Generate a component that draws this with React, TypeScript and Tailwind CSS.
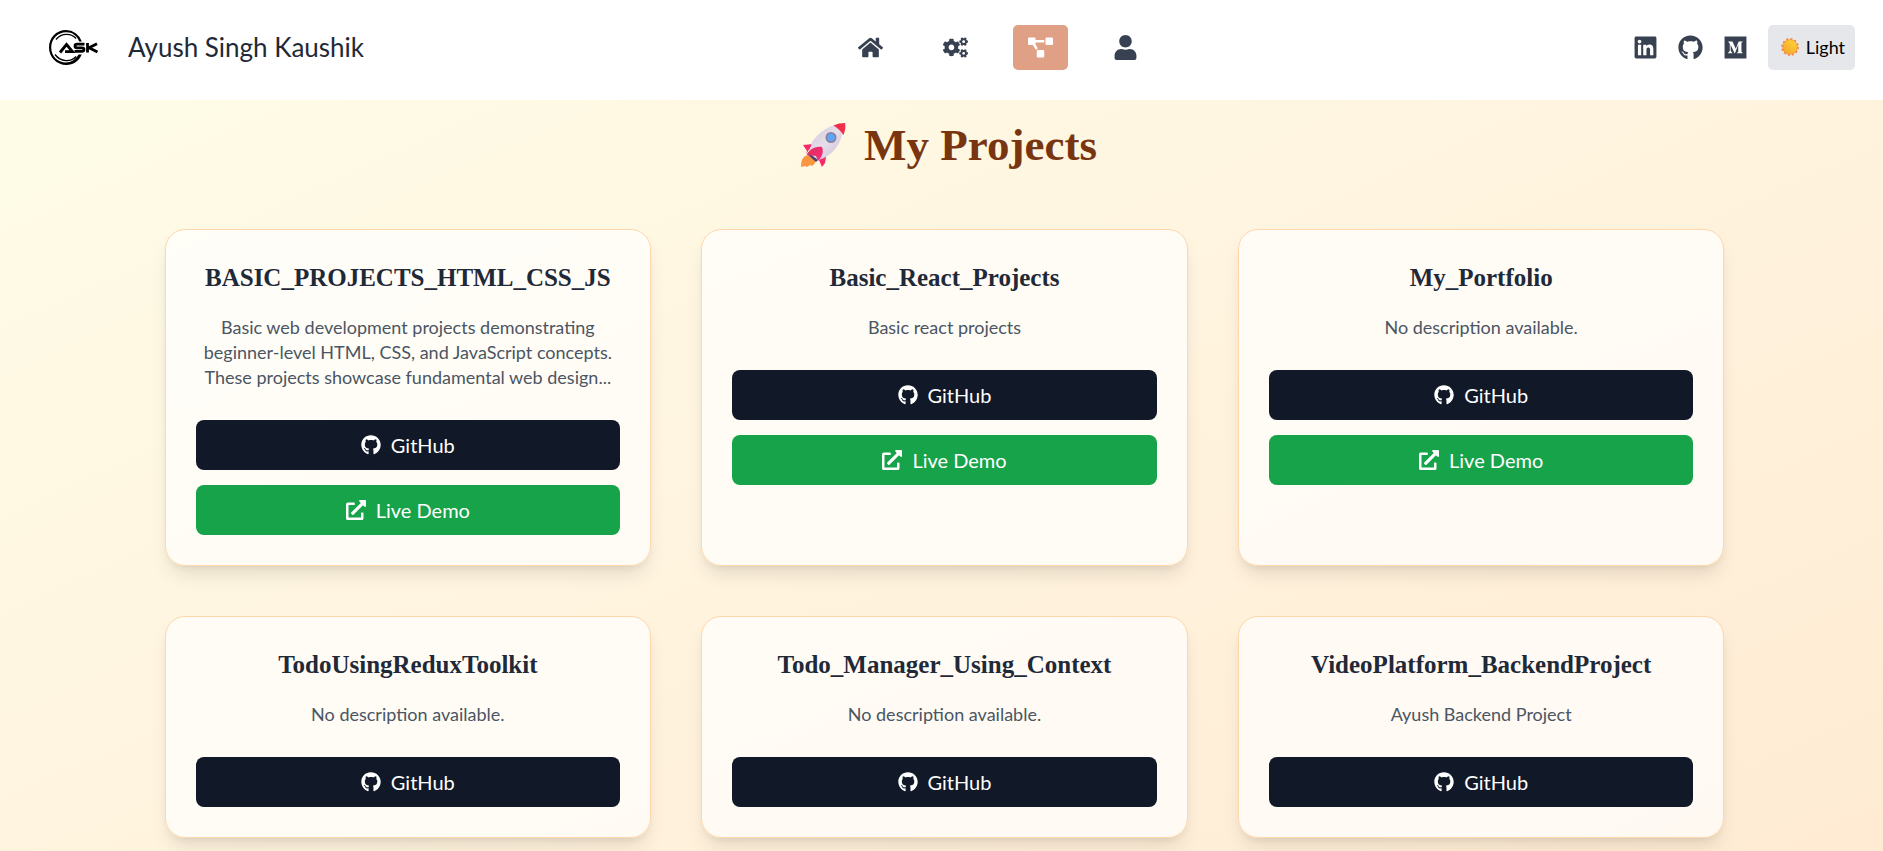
import { FaCogs, FaExternalLinkAlt, FaGithub, FaHome, FaLinkedin, FaMedium, FaProjectDiagram, FaUser } from "react-icons/fa";

type Project = { name: string; description: string; demo?: boolean };

const projects: Project[] = [
  {
    name: "BASIC_PROJECTS_HTML_CSS_JS",
    description:
      "Basic web development projects demonstrating beginner-level HTML, CSS, and JavaScript concepts. These projects showcase fundamental web design...",
    demo: true,
  },
  { name: "Basic_React_Projects", description: "Basic react projects", demo: true },
  { name: "My_Portfolio", description: "No description available.", demo: true },
  { name: "TodoUsingReduxToolkit", description: "No description available." },
  { name: "Todo_Manager_Using_Context", description: "No description available." },
  { name: "VideoPlatform_BackendProject", description: "Ayush Backend Project" },
];

function Logo() {
  return (
    <svg viewBox="0 0 52 36" className="h-9 w-[52px]" aria-hidden="true">
      <path d="M33.800 12.500A17 17 0 0 0 18 1C8 1 1 9 1 18.500S8.500 36 18.500 36C25 36 31 32 33.800 25.500L30.500 25.500C27.500 30.500 23 33.500 18 33.500 9.500 33.500 3.200 27 3.200 18.500S9.500 3.200 18.500 3.200C24 3.200 29 6.500 31.200 12.500Z" fill="#000" />
      <path d="M28 9.500C24 4.500 14 3 8 10.500M7 25.500c6 8 16 7.500 21 2" fill="none" stroke="#000" strokeWidth="1.300" />
      <g fill="none" stroke="#000" strokeWidth="2.800">
        <path d="M12 23.500 18.500 15.500 24.500 22.700H17" />
        <path d="M36.500 15.200H29Q27 15.200 27 17T29 18.800H34Q36 18.800 36 20.600T34 22.400H26.500" />
        <path d="M39.500 14V23.600M49 14.700 41 18.800 49.500 23" />
      </g>
    </svg>
  );
}

function Rocket() {
  return (
    <svg viewBox="0 0 46 46" className="size-[46px]" aria-hidden="true">
      <defs>
        <linearGradient id="hull" x1="0" y1="0" x2="1" y2="1">
          <stop offset="0" stopColor="#cfc6d6" />
          <stop offset="0.5" stopColor="#e6deeb" />
          <stop offset="1" stopColor="#c9b8d2" />
        </linearGradient>
        <linearGradient id="fin" x1="0" y1="0" x2="1" y2="1">
          <stop offset="0" stopColor="#d9305e" />
          <stop offset="1" stopColor="#ff2a78" />
        </linearGradient>
      </defs>
      <path d="M8 33C3 34 1 38 1 45l4-1 2 1 3-2 2 1c3-2 4-4 3-6z" fill="#fb9640" />
      <path d="M13 22 3 23 7 29 6 32zM24 33l-5 5 3 7 3-4 1-6z" fill="#f5296b" />
      <path d="M7 32l9 8 4-4-9-8z" fill="#48406f" />
      <path d="M44 2C30 2 20 9 12 20L9 31l9 7C31 35 43 22 44 2z" fill="url(#hull)" />
      <path d="M33.500 3.500C37 1.800 41 1 45 1c1 4 0 8-1.500 12-2.500-4-6-7-10-9.500z" fill="#f02f4b" />
      <path d="M22 25C14 24 9 28 7 33l9 1 2 5c4-4 6-9 4-14z" fill="url(#fin)" />
      <circle cx="31" cy="15.500" r="5.500" fill="#8d8197" />
      <circle cx="31" cy="15.500" r="3.800" fill="#5ba6f5" />
    </svg>
  );
}

function Sun() {
  return (
    <svg viewBox="0 0 20 20" className="size-5" aria-hidden="true">
      <defs>
        <linearGradient id="sun" x1="1" y1="0" x2="0" y2="1">
          <stop offset="0" stopColor="#fdd835" />
          <stop offset="1" stopColor="#f3a02c" />
        </linearGradient>
      </defs>
      <circle cx="10" cy="10" r="7.600" fill="#f68a3c" />
      <circle cx="10" cy="10" r="8" fill="none" stroke="#f68a3c" strokeWidth="1.800" strokeDasharray="2.200 2" />
      <circle cx="10" cy="10" r="6.900" fill="url(#sun)" />
    </svg>
  );
}

function ProjectCard({ name, description, demo }: Project) {
  const button = "flex h-[50px] items-center justify-center gap-2.5 rounded-lg text-xl text-white";
  return (
    <article className="rounded-[20px] border border-[#fed7aa] bg-white/70 p-[30px] text-center shadow-[0_12px_19px_-4px_rgba(0,0,0,0.1),0_5px_8px_-5px_rgba(0,0,0,0.1)]">
      <h2 className="mb-5 font-['Liberation_Serif',serif] text-[25px] leading-[35px] font-bold text-[#1f2937]">{name}</h2>
      <p className="mb-[30px] text-lg leading-[25px] text-[#4b5563]">{description}</p>
      <div className="flex flex-col gap-[15px]">
        <a href="#github" className={`${button} bg-[#111827]`}>
          <FaGithub className="size-5" />
          GitHub
        </a>
        {demo && (
          <a href="#demo" className={`${button} bg-[#16a34a]`}>
            <FaExternalLinkAlt className="size-5" />
            Live Demo
          </a>
        )}
      </div>
    </article>
  );
}

export default function App() {
  return (
    <div className="min-h-screen bg-gradient-to-br from-[#fefde8] via-[#fff4df] to-[#ffebd3] font-['Lato',sans-serif]">
      <header className="flex h-[100px] items-center justify-between bg-white pr-7 pb-1.5 pl-12">
        <a href="#home" className="flex items-center gap-7 text-[26px] text-[#1f2937]">
          <Logo />
          Ayush Singh Kaushik
        </a>
        <nav aria-label="Main" className="flex items-center gap-[30px] text-[25px] text-[#374151]">
          <a href="#home" aria-label="Home" className="flex h-[45px] w-[55px] items-center justify-center"><FaHome /></a>
          <a href="#skills" aria-label="Skills" className="flex h-[45px] w-[55px] items-center justify-center"><FaCogs /></a>
          <a href="#projects" aria-label="Projects" aria-current="page" className="flex h-[45px] w-[55px] items-center justify-center rounded-[5px] bg-[#e0a086] text-white"><FaProjectDiagram /></a>
          <a href="#about" aria-label="About" className="flex h-[45px] w-[55px] items-center justify-center"><FaUser /></a>
        </nav>
        <div className="flex items-center gap-5 text-[25px] text-[#374151]">
          <a href="#linkedin" aria-label="LinkedIn"><FaLinkedin /></a>
          <a href="#github" aria-label="GitHub"><FaGithub /></a>
          <a href="#medium" aria-label="Medium"><FaMedium /></a>
          <button type="button" className="flex h-[45px] items-center gap-1.5 rounded-[5px] bg-[#e5e7eb] pr-2.5 pl-3 text-lg text-black">
            <Sun />
            Light
          </button>
        </div>
      </header>
      <main className="mx-auto max-w-[1606px] pt-5 pr-5 pb-3 pl-[26px]">
        <h1 className="mb-[59px] flex h-[50px] items-center justify-center gap-[18px] pl-2 font-['Liberation_Serif',serif] text-[45px] leading-[50px] font-bold text-[#78350f]">
          <Rocket />
          My Projects
        </h1>
        <div className="grid grid-cols-1 gap-[50px] md:grid-cols-2 lg:grid-cols-3">
          {projects.map((project) => (
            <ProjectCard key={project.name} {...project} />
          ))}
        </div>
      </main>
    </div>
  );
}
